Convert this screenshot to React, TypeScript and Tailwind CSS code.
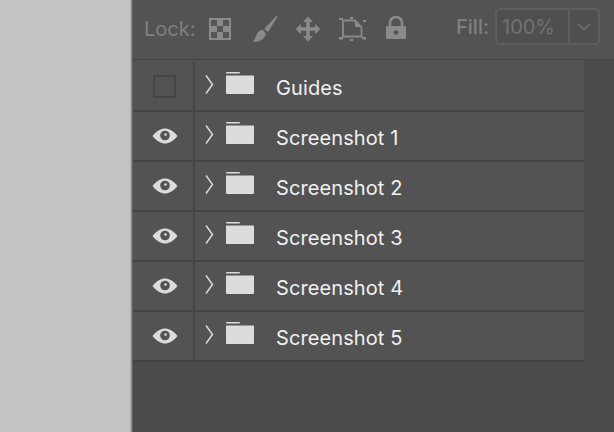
import React from 'react';

const font = { fontFamily: '"Inter", "Liberation Sans", sans-serif' };

const rows = ['Guides', 'Screenshot 1', 'Screenshot 2', 'Screenshot 3', 'Screenshot 4', 'Screenshot 5'];

const Eye = () => (
  <svg width="26" height="16" viewBox="0 0 26 16">
    <path d="M.5 8C5 2.500 9 .5 13 .5s8 2 12.500 7.500c-4.500 5.500-8.500 7.500-12.500 7.500S5 13.500.5 8z" fill="#dcdcdc" />
    <circle cx="13" cy="7.500" r="4.800" fill="#535353" />
    <circle cx="13.500" cy="6.500" r="1.300" fill="#dcdcdc" />
  </svg>
);

const Folder = () => (
  <svg width="28" height="22" viewBox="0 0 28 22" className="block">
    <rect x="0" y="0" width="14" height="1.500" rx=".7" fill="#dcdcdc" />
    <path d="M0 3.500h27a1 1 0 0 1 1 1V21a1 1 0 0 1-1 1H1a1 1 0 0 1-1-1z" fill="#dcdcdc" />
  </svg>
);

const Chevron = () => (
  <svg width="9" height="19" viewBox="0 0 9 19">
    <path d="M1 .5 7.500 9.500 1 18.500" fill="none" stroke="#d8d8d8" strokeWidth="1.500" />
  </svg>
);

const Row = ({ name, first }: { name: string; first: boolean }) => (
  <div className="flex h-[50px] w-[451px] border-b-2 border-[#444444] bg-[#535353]">
    <div className="flex w-[62px] items-center justify-center border-r-2 border-[#444444] pl-[3px]">
      {first ? <div className="h-[23px] w-[23px] border-2 border-[#454545]" /> : <div className="-mt-[1px]"><Eye /></div>}
    </div>
    <div className="flex items-center pl-[10px]">
      <div className="-mt-[4px] flex h-full items-center"><Chevron /></div>
      <div className="ml-[12px] -mt-[6px]"><Folder /></div>
      <span className="ml-[22px] mt-[4px] text-[20px] leading-none tracking-[0.1px] text-[#f0f0f0]">{name}</span>
    </div>
  </div>
);

const App = () => {
  return (
    <div className="flex h-[432px] w-[614px] overflow-hidden bg-[#c4c4c4]" style={font}>
      <div className="h-full w-[130px] shrink-0" />
      <div className="h-full w-[3px] shrink-0 bg-gradient-to-r from-[#bbbbbb] via-[#8f8f8f] to-[#4a4a4a]" />
      <div className="flex h-full flex-1 flex-col bg-[#4b4b4b]">
        <div className="flex h-[60px] shrink-0 items-center border-b border-[#444444] bg-[#535353] pb-[2px] pl-[11px] pr-[14px]">
          <span className="mt-[1px] text-[20px] leading-none text-[#808080]">Lock:</span>
          <div className="ml-[14px] grid h-[22px] w-[22px] grid-cols-3 grid-rows-3 border-2 border-[#8a8a8a] bg-[#8a8a8a]">
            <div className="bg-[#555555]" />
            <div />
            <div className="bg-[#555555]" />
            <div />
            <div className="bg-[#555555]" />
            <div />
            <div className="bg-[#555555]" />
            <div />
            <div className="bg-[#555555]" />
          </div>
          <svg width="26" height="28" viewBox="0 0 26 28" className="ml-[21px]">
            <path d="M24.500 1c.8 0 1 .8.6 1.500L16 17l-4-3z" fill="#8a8a8a" />
            <path d="M11 15c-4 0-6 3-7 6-.5 2-2 4-3 5.500 5 1 11-1 13-8z" fill="#8a8a8a" />
          </svg>
          <svg width="26" height="26" viewBox="0 0 26 26" className="ml-[17px]">
            <path d="M13 .5 18 6h-3.200v5.200H20V8l5.500 5-5.500 5v-3.200h-5.200V20H18l-5 5.500L8 20h3.200v-5.200H6V18L.5 13 6 8v3.200h5.200V6H8z" fill="#8a8a8a" />
          </svg>
          <svg width="28" height="24" viewBox="0 0 28 24" className="ml-[17px]">
            <path d="M5 3.500h12l6.500 6.500v9.500H5z" fill="none" stroke="#8a8a8a" strokeWidth="1.800" />
            <path d="M17 4v6h6z" fill="#8a8a8a" />
            <g fill="#8a8a8a">
              <rect x="1" y="1" width="4" height="2" />
              <rect x="12" y="0" width="3" height="2" />
              <rect x="25" y="3" width="3" height="2" />
              <rect x="1" y="20" width="4" height="2.500" />
              <rect x="12" y="22" width="3" height="2" />
              <rect x="24" y="20" width="4" height="2.500" />
            </g>
          </svg>
          <svg width="22" height="24" viewBox="0 0 22 24" className="ml-[19px] -mt-[1px]">
            <path d="M5 10V7a6 6 0 0 1 12 0v3" fill="none" stroke="#8a8a8a" strokeWidth="2.600" />
            <path d="M2 10h18a1 1 0 0 1 1 1v11a1 1 0 0 1-1 1H2a1 1 0 0 1-1-1V11a1 1 0 0 1 1-1z" fill="#8a8a8a" />
            <circle cx="11" cy="16.500" r="2.300" fill="#535353" />
          </svg>
          <span className="ml-auto -mt-[4px] text-[20px] font-medium leading-none text-[#808080]">Fill:</span>
          <div className="ml-[6px] -mt-[4px] flex h-[37px] w-[105px] items-center rounded-[5px] border-2 border-[#5e5e5e] bg-[#4f4f4f]">
            <span className="flex h-full w-[71px] items-center pl-[5px] text-[20px] leading-none text-[#727272]">100%</span>
            <div className="flex h-full flex-1 items-center justify-center border-l-2 border-[#5e5e5e]">
              <svg width="14" height="9" viewBox="0 0 14 9">
                <path d="M1 1.500 7 7.500 13 1.500" fill="none" stroke="#727272" strokeWidth="1.500" />
              </svg>
            </div>
          </div>
        </div>
        <div className="h-[2px] w-[451px] shrink-0 bg-[#535353]" />
        {rows.map((r, i) => (
          <Row key={r} name={r} first={i === 0} />
        ))}
      </div>
    </div>
  );
};

export default App;
